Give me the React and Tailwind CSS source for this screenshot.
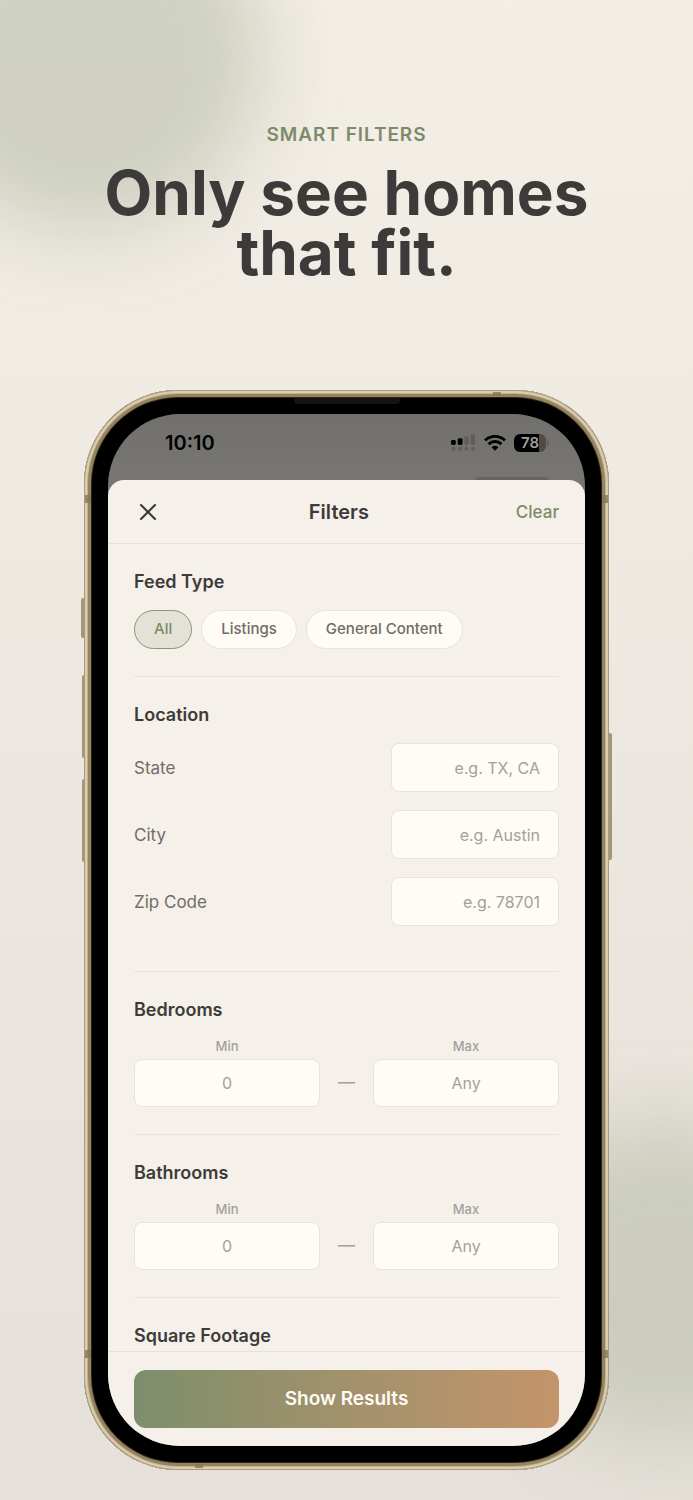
import { useState } from 'react'
import { X } from 'lucide-react'

const FEED_TYPES = ['All', 'Listings', 'General Content']

const LOCATION_FIELDS = [
  { id: 'state', label: 'State', placeholder: 'e.g. TX, CA' },
  { id: 'city', label: 'City', placeholder: 'e.g. Austin' },
  { id: 'zip', label: 'Zip Code', placeholder: 'e.g. 78701' },
]

const inputBase =
  'rounded-lg border border-[#e9e4d9] bg-[#fffcf6] text-base text-[#3d3b3a] placeholder:text-[#a3a09c] outline-none'

function StatusBar() {
  return (
    <div className="flex h-[57px] items-center justify-between pl-[57px] pr-9 text-black">
      <span className="text-xl font-semibold leading-6">10:10</span>
      <div className="flex items-center gap-2">
        {/* Dual SIM signal */}
        <svg width="25" height="18" viewBox="0 0 26 18" aria-hidden="true">
          <g fill="#000">
            <rect x="0" y="6" width="5" height="5" rx="1.5" />
            <rect x="7" y="4" width="5" height="7" rx="1.5" />
          </g>
          <g fill="#5f5e5b">
            <rect x="14" y="2" width="4.5" height="9" rx="1.5" />
            <rect x="20.5" y="0" width="4.5" height="11" rx="1.5" />
            <circle cx="2.5" cy="15" r="2" />
            <circle cx="9.5" cy="15" r="2" />
            <circle cx="16" cy="15" r="2" />
            <circle cx="23" cy="15" r="2" />
          </g>
        </svg>

        {/* Wi-Fi */}
        <svg width="22" height="16" viewBox="0 0 22 16" fill="none" stroke="#000" strokeWidth="3" aria-hidden="true">
          <path d="M1 5.4a14.4 14.4 0 0 1 20 0" />
          <path d="M4.6 9.2a9.2 9.2 0 0 1 12.8 0" />
          <path d="M11 15.8 7.6 12.2a4.8 4.8 0 0 1 6.8 0Z" fill="#000" stroke="none" />
        </svg>

        {/* Battery */}
        <div className="flex items-center gap-px">
          <div className="flex h-[18px] w-8 items-center justify-center rounded-md bg-linear-to-r from-black from-78% to-[#4c4b49] to-78% text-[15px] font-semibold leading-none text-[#a09f9b]">
            78
          </div>
          <span className="h-1.5 w-0.5 rounded-r-full bg-[#5f5e5b]" />
        </div>
      </div>
    </div>
  )
}

function Section({ title, children, className = 'border-b pb-[27px]' }) {
  return (
    <section className={`border-[#e7e2db] pt-[26px] ${className}`}>
      <h2 className="text-lg font-semibold leading-6 text-[#3d3b3a]">{title}</h2>
      {children}
    </section>
  )
}

function RangeFields({ name }) {
  const id = name.toLowerCase()
  return (
    <div className="mt-4 flex items-end">
      <div className="min-w-0 flex-1">
        <label htmlFor={`${id}-min`} className="mb-[5px] block text-center text-[13px] font-medium leading-4 text-[#a3a09c]">
          Min
        </label>
        <input id={`${id}-min`} inputMode="numeric" placeholder="0" className={`h-12 w-full px-4 text-center ${inputBase}`} />
      </div>
      <span className="flex h-12 w-[53px] items-center justify-center text-[17px] text-[#a3a09c]">—</span>
      <div className="min-w-0 flex-1">
        <label htmlFor={`${id}-max`} className="mb-[5px] block text-center text-[13px] font-medium leading-4 text-[#a3a09c]">
          Max
        </label>
        <input id={`${id}-max`} inputMode="numeric" placeholder="Any" className={`h-12 w-full px-4 text-center ${inputBase}`} />
      </div>
    </div>
  )
}

function FilterSheet() {
  const [feedType, setFeedType] = useState('All')

  return (
    <div className="relative rounded-t-2xl bg-[#f5f0e9]">
      <header className="flex h-16 items-center justify-between border-b border-[#e7e2db] px-[26px]">
        <button type="button" aria-label="Close" className="text-[#3d3b3a]">
          <X size={28} strokeWidth={1.8} />
        </button>
        <h1 className="text-xl font-semibold leading-6 text-[#3d3b3a]">Filters</h1>
        <button type="button" className="text-[17px] font-medium leading-6 text-[#7d8b69]">
          Clear
        </button>
      </header>

      <div className="px-[26px]">
        <Section title="Feed Type">
          <div className="mt-4 flex gap-[9px]">
            {FEED_TYPES.map((type) => (
              <button
                key={type}
                type="button"
                onClick={() => setFeedType(type)}
                className={`h-[39px] rounded-full border px-[19px] text-[15px] font-medium ${
                  type === feedType
                    ? 'border-[#8b9478] bg-[#e4e2d7] text-[#7d8b69]'
                    : 'border-[#e9e4d9] bg-[#fffcf6] text-[#6f6c69]'
                }`}
              >
                {type}
              </button>
            ))}
          </div>
        </Section>

        <Section title="Location" className="border-b pb-[45px]">
          <div className="mt-4 space-y-[18px]">
            {LOCATION_FIELDS.map((field) => (
              <div key={field.id} className="flex items-center justify-between">
                <label htmlFor={field.id} className="text-[17px] leading-6 text-[#6f6c69]">
                  {field.label}
                </label>
                <input
                  id={field.id}
                  placeholder={field.placeholder}
                  className={`h-[49px] w-42 px-[18px] text-right ${inputBase}`}
                />
              </div>
            ))}
          </div>
        </Section>

        <Section title="Bedrooms">
          <RangeFields name="Bedrooms" />
        </Section>

        <Section title="Bathrooms">
          <RangeFields name="Bathrooms" />
        </Section>

        <Section title="Square Footage" className="pb-[3px]" />
      </div>

      <footer className="border-t border-[#e7e2db] px-[26px] py-[18px]">
        <button
          type="button"
          className="h-[58px] w-full rounded-xl bg-linear-to-r from-[#7d8e6c] to-[#c4946a] text-[19px] font-semibold text-[#fffcf6]"
        >
          Show Results
        </button>
      </footer>
    </div>
  )
}

function PhoneFrame({ children }) {
  return (
    <div className="relative mx-[84px]">
      {/* Side buttons */}
      <span className="absolute -left-[3px] top-[208px] h-10 w-1 rounded-l-xs bg-[#a3977b]" />
      <span className="absolute -left-0.5 top-[285px] h-[83px] w-1 rounded-l-xs bg-[#a3977b]" />
      <span className="absolute -left-0.5 top-[389px] h-[83px] w-1 rounded-l-xs bg-[#a3977b]" />
      <span className="absolute -right-[3px] top-[343px] h-[127px] w-1 rounded-r-xs bg-[#a3977b]" />

      <div className="relative rounded-[94px] bg-black p-6 shadow-[inset_0_0_0_1px_#a99b80,inset_0_0_0_3px_#dccdb0,inset_0_0_0_4px_#c2b08e,inset_0_0_0_7px_#94835f,inset_0_0_0_8px_#2b2417]">
        {/* Antenna bands */}
        <span className="absolute left-px top-[105px] h-2 w-1.5 bg-[#85775a]/80" />
        <span className="absolute right-px top-[105px] h-2 w-1.5 bg-[#85775a]/80" />
        <span className="absolute bottom-[112px] left-px h-2 w-1.5 bg-[#85775a]/80" />
        <span className="absolute bottom-[112px] right-px h-2 w-1.5 bg-[#85775a]/80" />
        <span className="absolute right-[108px] top-0.5 h-1 w-2 bg-[#85775a]/80" />
        <span className="absolute bottom-0.5 left-[111px] h-1 w-2 bg-[#85775a]/80" />

        {/* Earpiece */}
        <span className="absolute left-1/2 top-2 h-1.5 w-[106px] -translate-x-1/2 rounded-b bg-[#141414]" />

        <div className="relative overflow-hidden rounded-[72px] bg-linear-to-b from-[#71706c] to-[#7a7975] to-10%">
          <StatusBar />
          <div className="flex h-[9px] items-end justify-end pr-9">
            <span className="h-[3px] w-[74px] rounded-t-full bg-[#67655a]" />
          </div>
          {children}
        </div>
      </div>
    </div>
  )
}

export default function App() {
  return (
    <main className="relative isolate min-h-screen overflow-hidden bg-linear-to-b from-[#f3eee6] to-[#e5e0d9] pb-[30px] pt-[123px] font-['Inter',sans-serif]">
      <div className="absolute -left-24 -top-32 -z-10 size-[360px] rounded-full bg-[#7d8e6c]/30 blur-2xl" />
      <div className="absolute -right-32 bottom-15 -z-10 size-[320px] rounded-full bg-[#7d8e6c]/25 blur-2xl" />

      <div className="mb-[107px] text-center">
        <p className="text-[19px] font-semibold leading-6 tracking-wider text-[#7d8b69]">SMART FILTERS</p>
        <p className="mt-4 text-[62px] font-bold leading-[60px] text-[#3d3b3a]">
          Only see homes
          <br />
          that fit.
        </p>
      </div>

      <PhoneFrame>
        <FilterSheet />
      </PhoneFrame>
    </main>
  )
}
